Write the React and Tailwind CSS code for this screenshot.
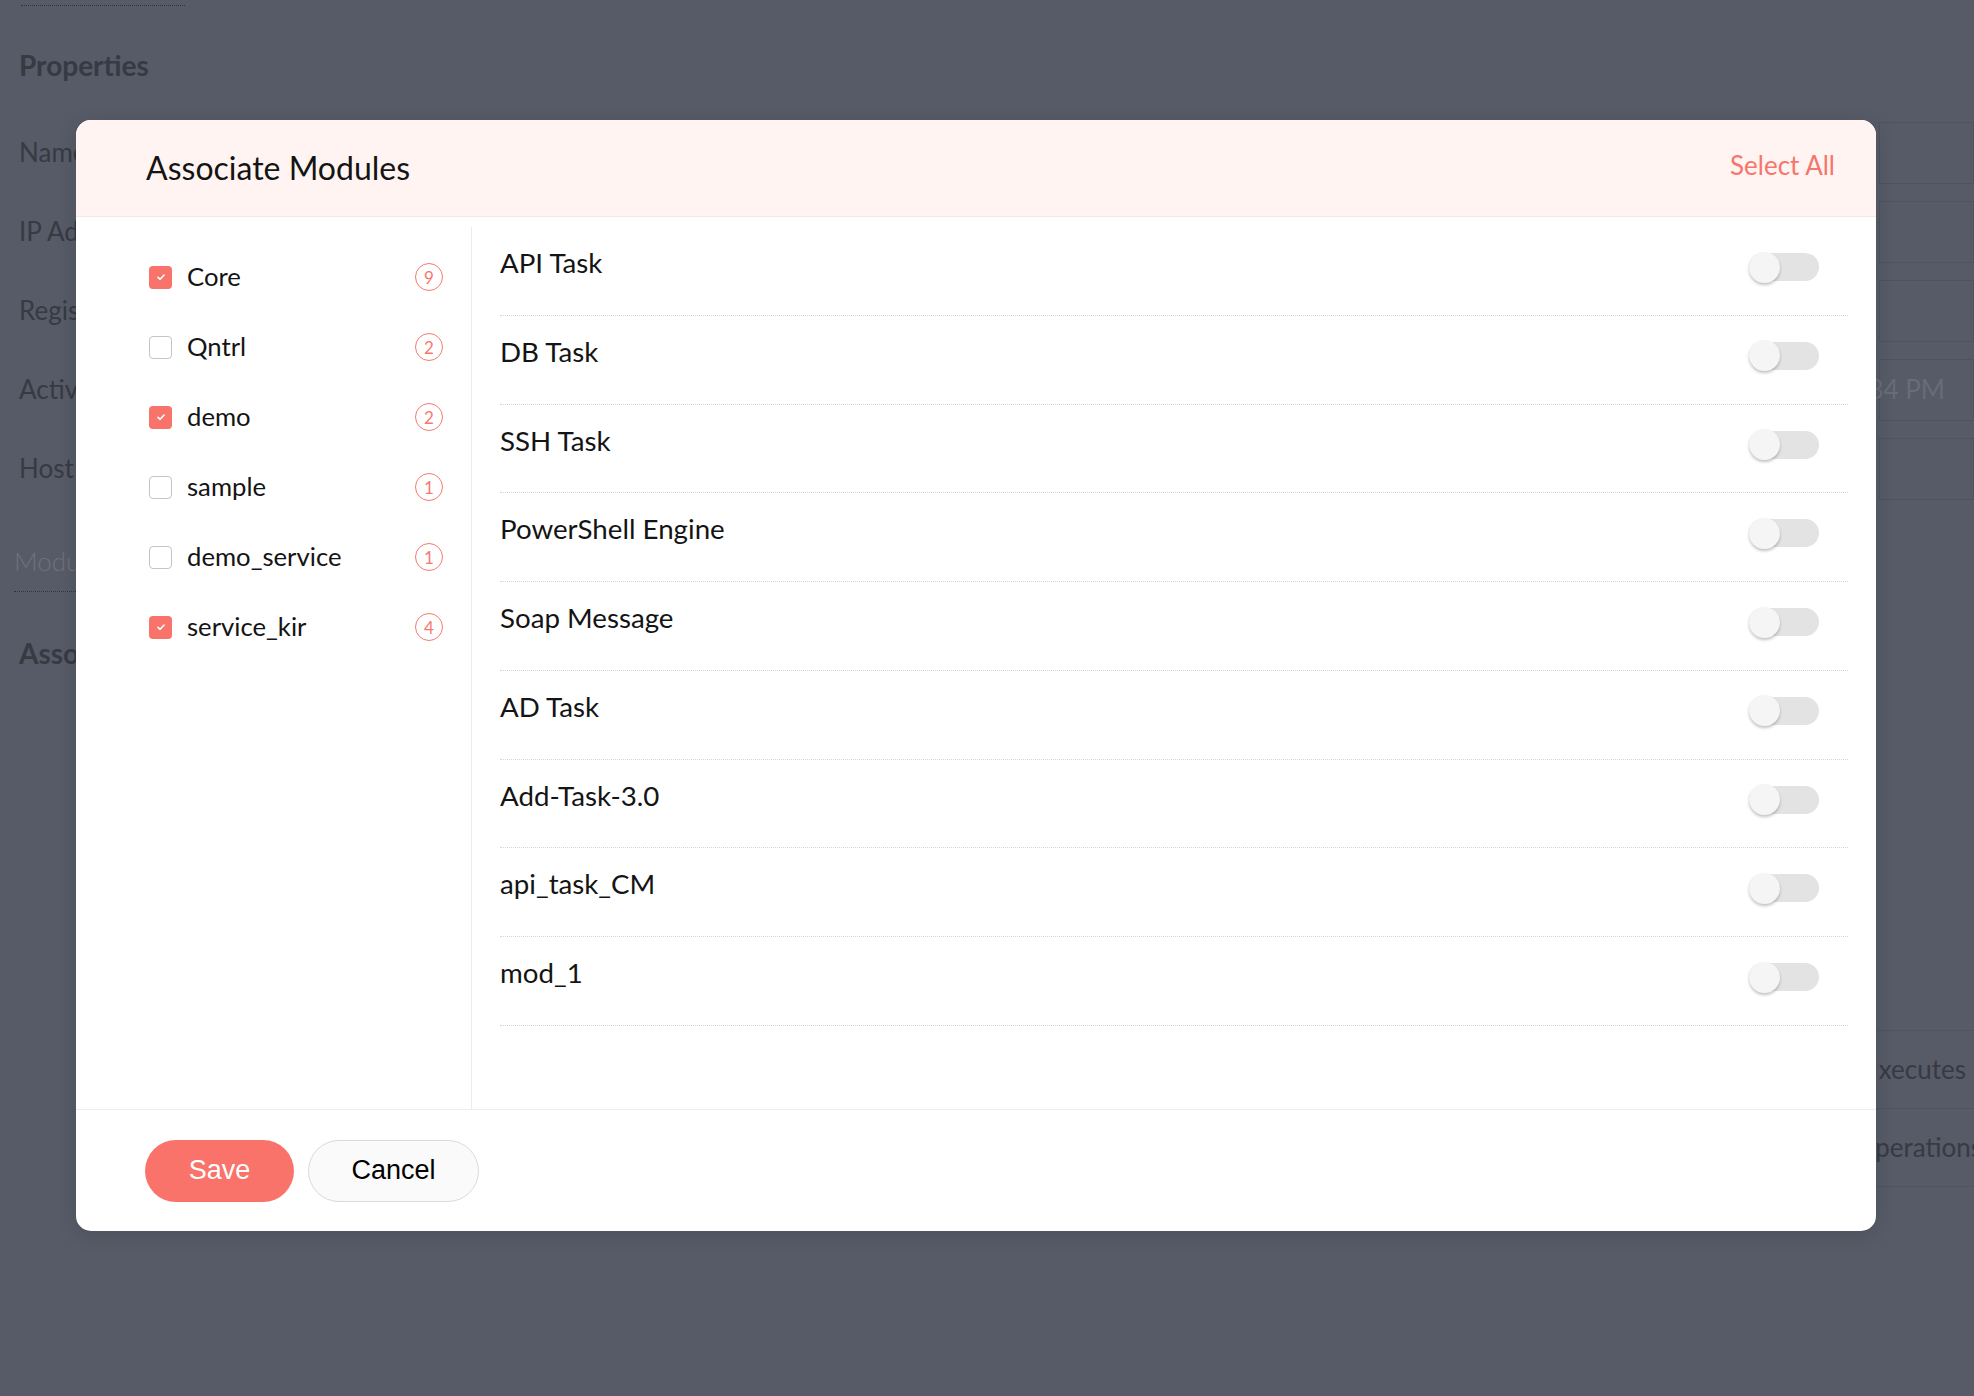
import React from "react";

const modules = [
  { name: "Core", count: 9, checked: true },
  { name: "Qntrl", count: 2, checked: false },
  { name: "demo", count: 2, checked: true },
  { name: "sample", count: 1, checked: false },
  { name: "demo_service", count: 1, checked: false },
  { name: "service_kir", count: 4, checked: true },
];

const tasks = [
  "API Task",
  "DB Task",
  "SSH Task",
  "PowerShell Engine",
  "Soap Message",
  "AD Task",
  "Add-Task-3.0",
  "api_task_CM",
  "mod_1",
];

const bgRows = [
  { label: "Name", value: "" },
  { label: "IP Address", value: "" },
  { label: "Registered On", value: "" },
  { label: "Active Since", value: "10:34 PM" },
  { label: "Host Name", value: "" },
];

function Checkbox({ checked }) {
  if (checked) {
    return (
      <span className="flex h-[23px] w-[23px] shrink-0 items-center justify-center rounded-[4px] bg-[#f8736a]">
        <svg width="12" height="12" viewBox="0 0 12 12" fill="none">
          <path d="M3 6.3l2.1 2 4-4.3" stroke="#fff" strokeWidth="1.6" strokeLinecap="round" strokeLinejoin="round" />
        </svg>
      </span>
    );
  }
  return <span className="h-[23px] w-[23px] shrink-0 rounded-[4px] border-[1.5px] border-[#c4c4c4] bg-white" />;
}

function Toggle() {
  return (
    <span className="relative mr-[29px] mt-[8px] flex h-[31px] w-[70px] shrink-0 items-center">
      <span className="h-[28px] w-[70px] rounded-full bg-[#e3e3e3]" />
      <span className="absolute left-0 top-0 h-[31px] w-[31px] rounded-full bg-[#f5f5f5] shadow-[0_2px_3px_rgba(0,0,0,0.24)]" />
    </span>
  );
}

export default function App() {
  return (
    <div className="relative h-[1396px] w-[1974px] overflow-hidden bg-[#565b67] font-['Lato',sans-serif]">
      {/* background page (dimmed) */}
      <div className="flex flex-col text-[#363a43]">
        <div className="ml-[21px] mt-[5px] w-[164px] border-t border-dotted border-[#30343b]" />
        <div className="ml-[19px] mt-[42px] text-[28px] font-bold leading-[34px]">Properties</div>
        <div className="mt-[31px] flex flex-col">
          {bgRows.map((r) => (
            <div key={r.label} className="flex h-[79px] items-center justify-between">
              <span className="pl-[19px] text-[26px]">{r.label.slice(0, 5)}</span>
              <span className="flex h-[62px] w-[95px] items-center justify-end border border-[#4f535e] pr-[28px]">
                <span className="whitespace-nowrap text-[26px] text-[#686c76]">{r.value}</span>
              </span>
            </div>
          ))}
        </div>
        <div className="ml-[14px] mt-[24px] flex h-[60px] w-[200px] items-center border-b border-dotted border-[#30343b]">
          <span className="text-[26px] font-light text-[#6e727c]">Modu</span>
        </div>
        <div className="ml-[19px] mt-[36px] text-[28px] font-bold leading-[50px]">Asso</div>
        <div className="ml-[1876px] mt-[352px] flex flex-col border-t border-[#50545f]">
          <div className="flex h-[78px] items-center justify-end border-b border-[#50545f] pr-[8px]">
            <span className="whitespace-nowrap text-[26px]">xecutes</span>
          </div>
          <div className="flex h-[78px] items-center justify-end overflow-hidden border-b border-[#50545f]">
            <span className="mr-[-8px] whitespace-nowrap text-[26px]">perations</span>
          </div>
        </div>
      </div>

      {/* modal */}
      <div className="absolute inset-0 pl-[76px] pt-[120px]">
        <div className="flex h-[1111px] w-[1800px] flex-col overflow-hidden rounded-[15px] bg-white shadow-[0_4px_20px_rgba(0,0,0,0.12)]">
          <div className="flex h-[97px] shrink-0 items-center justify-between border-b border-[#f1e9e7] bg-[#fff4f2] pl-[70px] pr-[41px]">
            <h2 className="text-[32px] leading-none text-[#141414]">Associate Modules</h2>
            <button className="mb-[6px] text-[26px] leading-none text-[#f7766c]">Select All</button>
          </div>

          <div className="flex h-[892px] pt-[10px]">
            <div className="flex w-[396px] shrink-0 flex-col border-r border-[#ececec] pl-[73px] pr-[28px] pt-[15px]">
              {modules.map((m) => (
                <div key={m.name} className="flex h-[70px] items-center">
                  <Checkbox checked={m.checked} />
                  <span className="ml-[15px] flex-1 text-[25.7px] leading-none text-[#141414]">{m.name}</span>
                  <span className="flex h-[28px] w-[28px] items-center justify-center rounded-full border-[1.5px] border-[#f7786e] text-[17px] leading-none text-[#f7786e]">
                    {m.count}
                  </span>
                </div>
              ))}
            </div>

            <div className="flex flex-1 flex-col px-[28px]">
              {tasks.map((t) => (
                <div key={t} className="h-[88.75px] shrink-0 border-b border-dotted border-[#d6d6d6]">
                  <div className="flex h-[72px] items-center justify-between">
                    <span className="text-[27.7px] leading-none text-[#141414]">{t}</span>
                    <Toggle />
                  </div>
                </div>
              ))}
            </div>
          </div>

          <div className="flex h-[122px] shrink-0 items-center gap-[14px] border-t border-[#ececec] pl-[69px] font-['Liberation_Sans',sans-serif]">
            <button className="h-[62px] w-[149px] rounded-full bg-[#f9736a] text-[27px] text-white">Save</button>
            <button className="h-[62px] w-[171px] rounded-full border border-[#dadada] bg-[#fafafa] text-[27px] text-black">Cancel</button>
          </div>
        </div>
      </div>
    </div>
  );
}
